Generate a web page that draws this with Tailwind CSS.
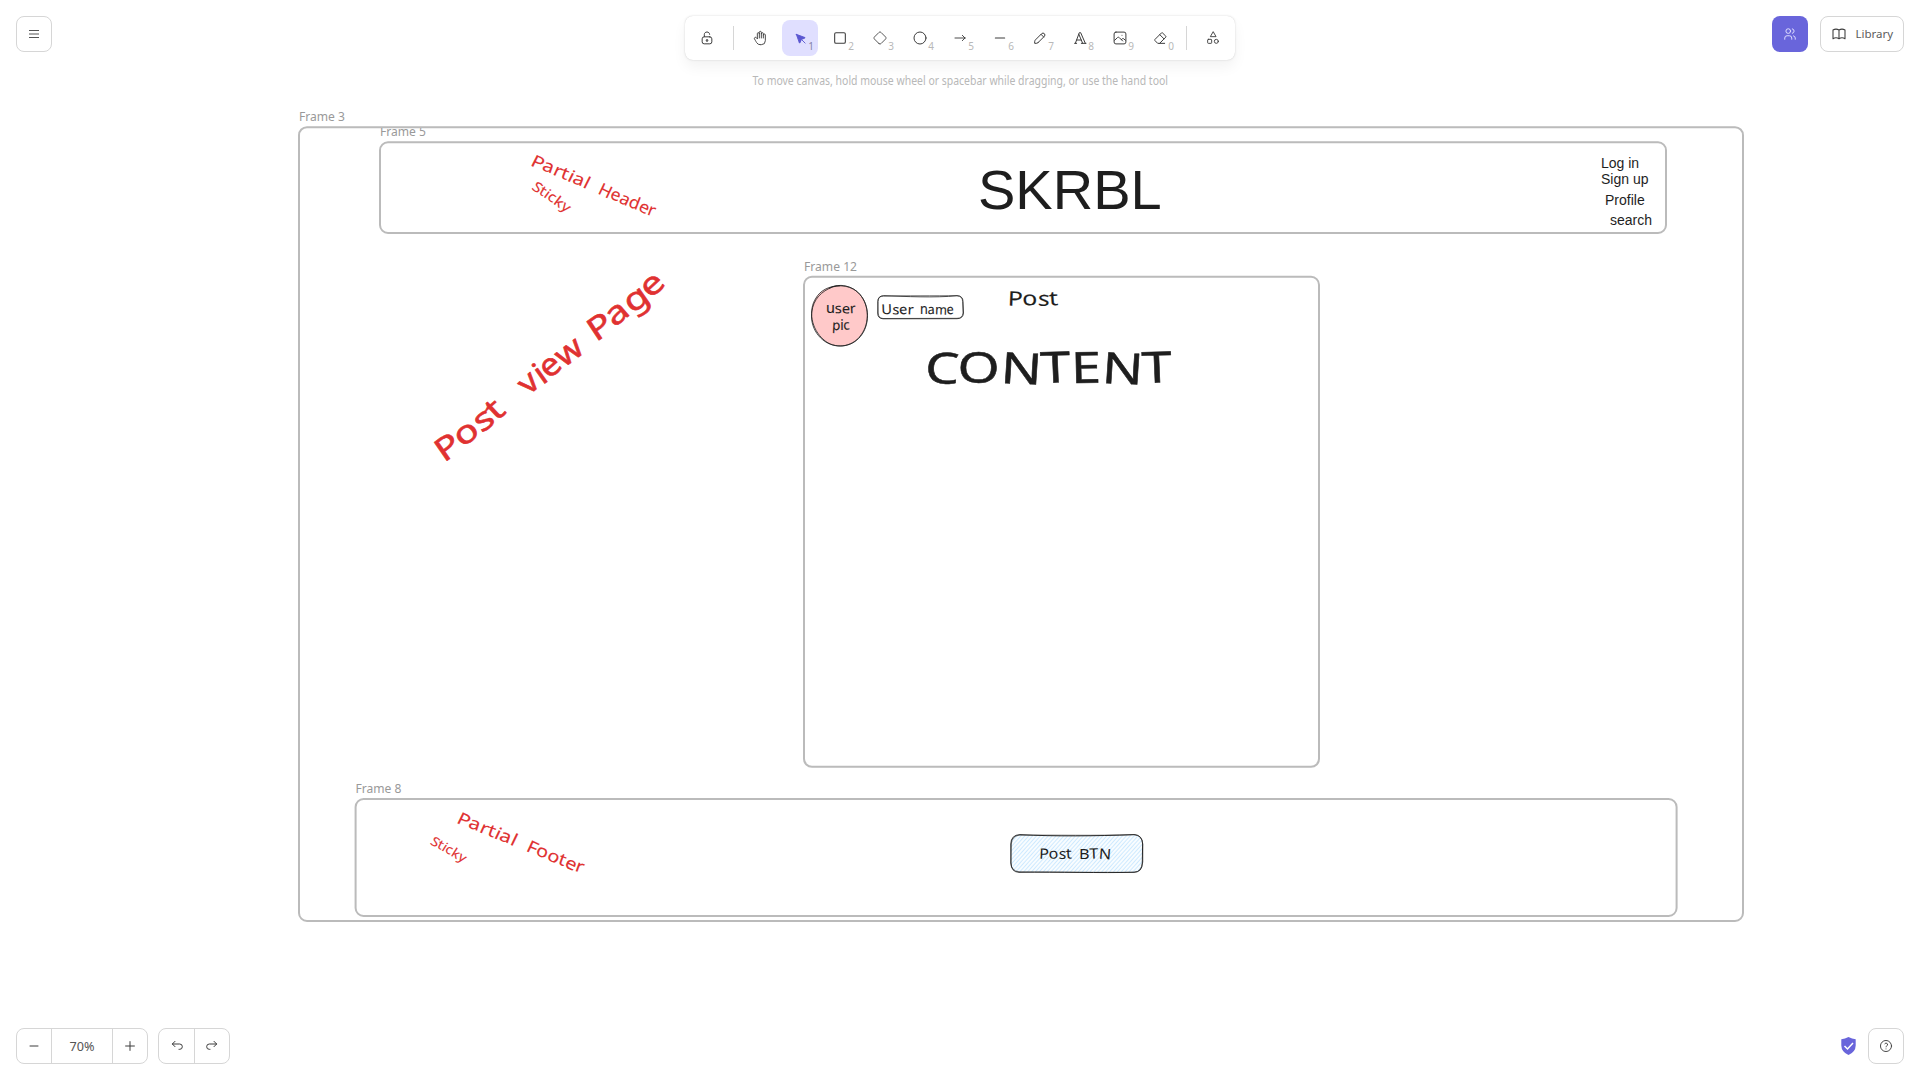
<!DOCTYPE html>
<html lang="en">
<head>
<meta charset="utf-8">
<title>Whiteboard</title>
<script src="https://cdn.jsdelivr.net/npm/@tailwindcss/browser@4"></script>
</head>
<body class="relative h-screen w-screen overflow-hidden bg-white font-['Noto_Sans',sans-serif] text-[#3d3d3d]">

<!-- drawing canvas -->
<svg class="absolute inset-0" width="1920" height="1080" viewBox="0 0 1920 1080">
  <defs>
    <pattern id="hatch" width="2.9" height="2.9" patternUnits="userSpaceOnUse" patternTransform="rotate(-48)">
      <path d="M0 1.4H3" stroke="#b9e1ff" stroke-width=".7"/>
    </pattern>
    <clipPath id="f3"><rect x="300" y="128" width="1442" height="792"/></clipPath>
  </defs>
  <g fill="none" stroke="#bbb" stroke-width="2">
    <rect x="299" y="127.2" width="1444" height="793.8" rx="8"/>
    <rect x="380" y="142.3" width="1286" height="90.7" rx="8"/>
    <rect x="804" y="276.8" width="515" height="490" rx="8"/>
    <rect x="355.6" y="799" width="1321" height="117" rx="8"/>
  </g>
  <g fill="#999" font-size="13">
    <text x="299" y="121.2" textLength="46" lengthAdjust="spacingAndGlyphs">Frame 3</text>
    <text x="380" y="136" textLength="46" lengthAdjust="spacingAndGlyphs" clip-path="url(#f3)">Frame 5</text>
    <text x="804" y="271.2" textLength="53" lengthAdjust="spacingAndGlyphs">Frame 12</text>
    <text x="355.5" y="793.2" textLength="46" lengthAdjust="spacingAndGlyphs">Frame 8</text>
  </g>

  <!-- red annotations -->
  <g fill="#e03131" stroke="#e03131" stroke-linejoin="round">
    <g transform="translate(448 460) rotate(-38.4)" font-size="31.500" stroke-width=".6">
      <text x="-5" y="0" rotate="3 0 4 -4" textLength="81" lengthAdjust="spacingAndGlyphs">Post</text>
      <text x="103" y="0" rotate="-4 3 -3 2" textLength="72" lengthAdjust="spacingAndGlyphs">view</text>
      <text x="189" y="0" rotate="4 -2 3 -5" textLength="92" lengthAdjust="spacingAndGlyphs">Page</text>
    </g>
    <g transform="translate(531.7 165.7) rotate(22.9)" font-size="17" stroke-width=".1">
      <text x="-2" y="0" rotate="3 -3 2 -2 3 -2 3" textLength="62" lengthAdjust="spacingAndGlyphs">Partial</text>
      <text x="71" y="0" rotate="3 -3 2 -2 3 -2" textLength="61" lengthAdjust="spacingAndGlyphs">Header</text>
    </g>
    <g transform="translate(531 188.5) rotate(34)" font-size="14" stroke-width=".1">
      <text x="0" y="0" rotate="4 -3 2 -2 3 4" textLength="43" lengthAdjust="spacingAndGlyphs">Sticky</text>
    </g>
    <g transform="translate(457.7 823.3) rotate(22.1)" font-size="17" stroke-width=".1">
      <text x="-2" y="0" rotate="3 -3 2 -2 3 -2 3" textLength="63" lengthAdjust="spacingAndGlyphs">Partial</text>
      <text x="73" y="0" rotate="3 -3 2 -2 3 -2" textLength="61" lengthAdjust="spacingAndGlyphs">Footer</text>
    </g>
    <g transform="translate(429.5 843.5) rotate(29.5)" font-size="13" stroke-width=".1">
      <text x="0" y="0" rotate="4 -3 2 -2 3 4" textLength="39" lengthAdjust="spacingAndGlyphs">Sticky</text>
    </g>
  </g>

  <!-- header content -->
  <g fill="#1e1e1e" font-family="Liberation Sans, sans-serif" font-size="14">
    <text x="978" y="209.3" font-size="56">SKRBL</text>
    <text x="1601" y="168">Log in</text>
    <text x="1601" y="184">Sign up</text>
    <text x="1605" y="205">Profile</text>
    <text x="1610" y="225">search</text>
  </g>

  <!-- post card -->
  <g fill="none" stroke="#1e1e1e" stroke-width=".8">
    <path d="M829 288.500C838 283.500 853 285.500 860 294.500C869 305 870 323 861 335C852 348 834 349 824 340C811 329 808 310 816 298C820 291 828 286 840 285.700" fill="#ffc9c9"/>
    <path d="M829 288.500C832 286.500 836 285.400 841 285.400C856 286 867.500 299 867.500 315.500C867.500 332 857 345 842 346C825 347 812 333 811.500 317C811.500 303 818 294 829 288.500"/>
    <path d="M883.500 295.600C905 296.600 935 297.800 957 295.800Q963 296 963 301.500L963.500 313Q963 318.800 957 318.700L883 318.800Q877.600 318.500 877.700 313L878 301.500Q878 296 883.500 295.600Z"/>
    <path d="M883.500 296.200C905 295.400 935 296 957 295.500Q962.500 296 962.600 301.500L963 313Q962.500 318.300 957 318.300L883 318.500Q878.300 318 878.200 313L877.700 301.500Q878 296 883.500 296.200Z" stroke-width=".6"/>
  </g>
  <g fill="#1e1e1e" stroke="#1e1e1e" stroke-width=".1" stroke-linejoin="round" font-size="13.500">
    <text x="826" y="313.200" rotate="0 -3 2 -3" textLength="30" lengthAdjust="spacingAndGlyphs">user</text>
    <text x="832" y="329.800" rotate="3 0 -3" textLength="18" lengthAdjust="spacingAndGlyphs">pic</text>
    <text x="881.500" y="314.200" rotate="-2 2 -3 2" textLength="32" lengthAdjust="spacingAndGlyphs">User</text>
    <text x="920" y="314.200" rotate="0 -3 2 -3" textLength="34" lengthAdjust="spacingAndGlyphs">name</text>
    <text x="1007.500" y="305.500" font-size="20" rotate="2 -2 3 -3" textLength="51" lengthAdjust="spacingAndGlyphs">Post</text>
    <text x="924.500" y="383" font-size="43" stroke-width=".5" rotate="2 0 3 -2 -1 3 -2" textLength="248" lengthAdjust="spacingAndGlyphs">CONTENT</text>
  </g>

  <!-- post button -->
  <path d="M1020 834.600C1055 836.600 1095 836 1134 834.700Q1142.500 835 1142.600 844L1142.300 863Q1142.500 872 1134 872.200C1100 873.300 1060 871.500 1019 872.300Q1011 872 1011 863L1010.800 844Q1011 835 1020 834.600Z" fill="#fafdff"/>
  <path d="M1020 834.600C1055 836.600 1095 836 1134 834.700Q1142.500 835 1142.600 844L1142.300 863Q1142.500 872 1134 872.200C1100 873.300 1060 871.500 1019 872.300Q1011 872 1011 863L1010.800 844Q1011 835 1020 834.600Z" fill="url(#hatch)" stroke="#1e1e1e" stroke-width=".9"/>
  <path d="M1019 835.200C1055 834.800 1095 836 1135 834.500Q1142 836 1142.800 844L1142.800 862Q1141 872.400 1134 872.400C1100 872 1060 872.800 1019 871.800Q1011.500 871 1010.700 863L1011.300 844Q1012 836 1019 835.200Z" fill="none" stroke="#1e1e1e" stroke-width=".6"/>
  <g fill="#1e1e1e" font-size="14.500">
    <text x="1039" y="858.800" rotate="2 -2 3 -3" textLength="33" lengthAdjust="spacingAndGlyphs">Post</text>
    <text x="1079" y="858.800" rotate="0 -2 4" textLength="32" lengthAdjust="spacingAndGlyphs">BTN</text>
  </g>
</svg>

<!-- interface over the canvas -->
<div class="relative flex h-full flex-col justify-between p-4">
  <header class="grid grid-cols-[1fr_550px_1fr] items-start">
    <button class="flex size-9 items-center justify-center rounded-lg border border-[#d6d6d6] bg-white">
      <svg class="size-[34px]" viewBox="0 0 34 34" shape-rendering="crispEdges"><path d="M12 13h10v1H12zM12 20h10v1H12z" fill="#555"/><path d="M12 16h10v2H12z" fill="#aaa"/></svg>
    </button>

    <div class="flex flex-col items-center">
      <div class="flex h-11 w-[550px] items-center gap-1 rounded-lg bg-white p-1 shadow-[0_0_1px_rgba(0,0,0,0.17),0_0_3px_rgba(0,0,0,0.08),0_7px_14px_rgba(0,0,0,0.05)] [&_svg]:fill-none [&_svg]:stroke-[#3d3d3d] [&_svg]:[stroke-linecap:round] [&_svg]:[stroke-linejoin:round]">
        <div class="flex size-9 items-center justify-center"><svg class="size-4" viewBox="0 0 20 20" stroke-width="1.25"><path d="M13.542 8.542H6.458a2.500 2.500 0 0 0-2.500 2.500v3.750a2.500 2.500 0 0 0 2.500 2.500h7.084a2.500 2.500 0 0 0 2.500-2.500v-3.750a2.500 2.500 0 0 0-2.500-2.500Z"/><path d="M10 13.958a1.042 1.042 0 1 0 0-2.083 1.042 1.042 0 0 0 0 2.083Z"/><path d="M6.667 8.333V5.417C6.667 3.806 8.159 2.500 10 2.500c1.841 0 3.333 1.306 3.333 2.917"/></svg></div>
        <div class="mx-1 h-6 w-px bg-[#d6d6d6]"></div>
        <div class="flex size-9 items-center justify-center"><svg class="size-4" viewBox="0 0 24 24" stroke-width="1.4"><path d="M8 13v-7.500a1.500 1.500 0 0 1 3 0v6.500"/><path d="M11 5.500v-2a1.500 1.500 0 1 1 3 0v8.500"/><path d="M14 5.500a1.500 1.500 0 0 1 3 0v6.500"/><path d="M17 7.500a1.500 1.500 0 0 1 3 0v8.500a6 6 0 0 1-6 6h-2h.208a6 6 0 0 1-5.012-2.700a69.740 69.740 0 0 1-.196-.3c-.312-.479-1.407-2.388-3.286-5.728a1.500 1.500 0 0 1 .536-2.022a1.867 1.867 0 0 1 2.280.280l1.470 1.470"/></svg></div>
        <div class="relative flex size-9 items-center justify-center rounded-lg bg-[#e0dfff]"><svg class="size-4 !fill-[#5b57d1] !stroke-[#5b57d1]" viewBox="0 0 22 22" stroke-width="1.25"><path d="M6 6l4.153 11.793a.365.365 0 0 0 .331.207.366.366 0 0 0 .332-.207L13 13l4.787-1.994a.355.355 0 0 0 .213-.323.355.355 0 0 0-.213-.323L6 6Z"/><path d="m13.500 13.500 4.500 4.500"/></svg><span class="absolute right-1 bottom-1 text-[10px] leading-3 text-[#8583a8]">1</span></div>
        <div class="relative flex size-9 items-center justify-center"><svg class="size-4" viewBox="0 0 24 24" stroke-width="1.6"><rect x="4" y="4" width="16" height="16" rx="2"/></svg><span class="absolute right-1 bottom-1 text-[10px] leading-3 text-[#b8b8b8]">2</span></div>
        <div class="relative flex size-9 items-center justify-center"><svg class="size-4" viewBox="0 0 24 24" stroke-width="1.300"><path d="M10.500 20.400l-6.900-6.900c-.781-.781-.781-2.219 0-3l6.900-6.900c.781-.781 2.219-.781 3 0l6.900 6.900c.781.781.781 2.219 0 3l-6.900 6.900c-.781.781-2.219.781-3 0Z"/></svg><span class="absolute right-1 bottom-1 text-[10px] leading-3 text-[#b8b8b8]">3</span></div>
        <div class="relative flex size-9 items-center justify-center"><svg class="size-4" viewBox="0 0 24 24" stroke-width="1.500"><circle cx="12" cy="12" r="9"/></svg><span class="absolute right-1 bottom-1 text-[10px] leading-3 text-[#b8b8b8]">4</span></div>
        <div class="relative flex size-9 items-center justify-center"><svg class="size-4" viewBox="0 0 24 24" stroke-width="1.400"><path d="M4.500 12h15M15.500 16l4-4M15.500 8l4 4"/></svg><span class="absolute right-1 bottom-1 text-[10px] leading-3 text-[#b8b8b8]">5</span></div>
        <div class="relative flex size-9 items-center justify-center"><svg class="size-4" viewBox="0 0 24 24" stroke-width="1.600"><path d="M5 12h14"/></svg><span class="absolute right-1 bottom-1 text-[10px] leading-3 text-[#b8b8b8]">6</span></div>
        <div class="relative flex size-9 items-center justify-center"><svg class="size-4" viewBox="0 0 20 20" stroke-width="1.250"><path d="m7.643 15.690 7.774-7.773a2.357 2.357 0 1 0-3.334-3.334L4.310 12.357a3.333 3.333 0 0 0-.977 2.357v1.953h1.953c.884 0 1.732-.352 2.357-.977Z"/><path d="m11.250 5.417 3.333 3.333"/></svg><span class="absolute right-1 bottom-1 text-[10px] leading-3 text-[#b8b8b8]">7</span></div>
        <div class="relative flex size-9 items-center justify-center"><svg class="size-4" viewBox="0 0 24 24" stroke-width="1.500"><path d="M4 20h3M14 20h7M6.900 15h6.900M10.200 6.300l5.800 13.700M5 20l6-16h2l7 16"/></svg><span class="absolute right-1 bottom-1 text-[10px] leading-3 text-[#b8b8b8]">8</span></div>
        <div class="relative flex size-9 items-center justify-center"><svg class="size-4" viewBox="0 0 20 20" stroke-width="1.250"><path d="M12.500 6.667h.01"/><path d="M4.910 2.625h10.180a2.284 2.284 0 0 1 2.285 2.284v10.182a2.284 2.284 0 0 1-2.284 2.284H4.909a2.284 2.284 0 0 1-2.284-2.284V4.909a2.284 2.284 0 0 1 2.284-2.284Z"/><path d="m3.333 12.917 3.334-3.334c.773-.744 1.726-.744 2.500 0l4.166 4.167"/><path d="m11.667 12.083.833-.833c.774-.744 1.726-.744 2.500 0l1.667 1.667"/></svg><span class="absolute right-1 bottom-1 text-[10px] leading-3 text-[#b8b8b8]">9</span></div>
        <div class="relative flex size-9 items-center justify-center"><svg class="size-4" viewBox="0 0 24 24" stroke-width="1.500"><path d="M19 20h-10.500l-4.210-4.300a1 1 0 0 1 0-1.410l10-10a1 1 0 0 1 1.410 0l5 5a1 1 0 0 1 0 1.410l-9.200 9.300"/><path d="M18 13.300l-6.300-6.300"/></svg><span class="absolute right-1 bottom-1 text-[10px] leading-3 text-[#b8b8b8]">0</span></div>
        <div class="mx-1 h-6 w-px bg-[#d6d6d6]"></div>
        <div class="flex size-9 items-center justify-center"><svg class="size-4" viewBox="0 0 24 24" stroke-width="1.400"><path d="M12 3l-4 7h8z"/><circle cx="17" cy="17" r="3"/><rect x="4" y="14" width="6" height="6" rx="1"/></svg></div>
      </div>
      <svg class="mt-2 overflow-visible" width="440" height="24"><text x="12.500" y="16.500" font-size="12.500" fill="#b8b8b8" textLength="415.500" lengthAdjust="spacingAndGlyphs">To move canvas, hold mouse wheel or spacebar while dragging, or use the hand tool</text></svg>
    </div>

    <div class="flex justify-end gap-3">
      <button class="flex size-9 items-center justify-center rounded-lg bg-[#6965db]">
        <svg class="size-[14px] fill-none stroke-[#e0dfff]" viewBox="0 0 24 24" stroke-width="1.700" stroke-linecap="round"><circle cx="9" cy="7" r="4"/><path d="M3 21v-2a4 4 0 0 1 4-4h4a4 4 0 0 1 4 4v2M16 3.130a4 4 0 0 1 0 7.750M21 21v-2a4 4 0 0 0-3-3.850"/></svg>
      </button>
      <button class="flex h-9 w-21 items-center rounded-lg border border-[#d6d6d6] bg-white pl-[10px]">
        <svg class="size-4 fill-none stroke-[#3d3d3d]" viewBox="0 0 24 24" stroke-width="1.600" stroke-linecap="round" stroke-linejoin="round"><path d="M3 19a9 9 0 0 1 9 0a9 9 0 0 1 9 0M3 6a9 9 0 0 1 9 0a9 9 0 0 1 9 0M3 6v13M12 6v13M21 6v13"/></svg>
        <svg class="ml-2" width="42" height="20"><text x="0.500" y="14" font-size="11.500" fill="#5c5c5c" textLength="37.500">Library</text></svg>
      </button>
    </div>
  </header>

  <footer class="flex items-center justify-between">
    <div class="flex gap-2.5">
      <div class="flex h-9 w-33 divide-x divide-[#d6d6d6] rounded-lg border border-[#d6d6d6] bg-white">
        <button class="flex w-[35px] shrink-0 items-center justify-center"><svg class="size-4 fill-none stroke-[#3d3d3d]" viewBox="0 0 20 20" stroke-width="1.250"><path d="M4.500 10h11"/></svg></button>
        <button class="flex w-[61px] shrink-0 items-center justify-center"><svg width="30" height="20"><text x="2.500" y="15" font-size="12.500" fill="#555" textLength="25" lengthAdjust="spacingAndGlyphs">70%</text></svg></button>
        <button class="flex flex-1 items-center justify-center"><svg class="size-4 fill-none stroke-[#3d3d3d]" viewBox="0 0 20 20" stroke-width="1.250"><path d="M4 10h12M10 4v12"/></svg></button>
      </div>
      <div class="flex h-9 w-18 divide-x divide-[#d6d6d6] rounded-lg border border-[#d6d6d6] bg-white">
        <button class="flex w-[36px] items-center justify-center"><svg class="size-4 fill-none stroke-[#3d3d3d]" viewBox="0 0 20 20" stroke-width="1.250" stroke-linecap="round" stroke-linejoin="round"><path d="M7.500 10.833 4.167 7.500 7.500 4.167M4.167 7.500h9.166a3.333 3.333 0 0 1 0 6.667H12.500"/></svg></button>
        <button class="flex flex-1 items-center justify-center"><svg class="size-4 fill-none stroke-[#3d3d3d]" viewBox="0 0 20 20" stroke-width="1.250" stroke-linecap="round" stroke-linejoin="round"><path d="M12.500 10.833 15.833 7.500 12.500 4.167M15.833 7.500H6.667a3.333 3.333 0 1 0 0 6.667H7.500"/></svg></button>
      </div>
    </div>
    <div class="flex items-center gap-3">
      <svg width="15" height="18" viewBox="0.500 0 15 18"><path d="M8 0Q11.500 2 15.200 2.300V8.500Q15 15 8 18Q1 15 .800 8.500V2.300Q4.500 2 8 0Z" fill="#6965db"/><path d="M4 9l3 3 5.500-6" fill="none" stroke="#fff" stroke-width="1.500"/></svg>
      <button class="flex size-9 items-center justify-center rounded-lg border border-[#d6d6d6] bg-white">
        <svg class="size-[14px] fill-none stroke-[#3d3d3d]" viewBox="0 0 24 24" stroke-width="1.600" stroke-linecap="round"><circle cx="12" cy="12" r="9.500"/><path d="M12 17v.01M12 13.500a1.500 1.500 0 0 1 1-1.500a2.600 2.600 0 1 0-3-4"/></svg>
      </button>
    </div>
  </footer>
</div>
</body>
</html>
